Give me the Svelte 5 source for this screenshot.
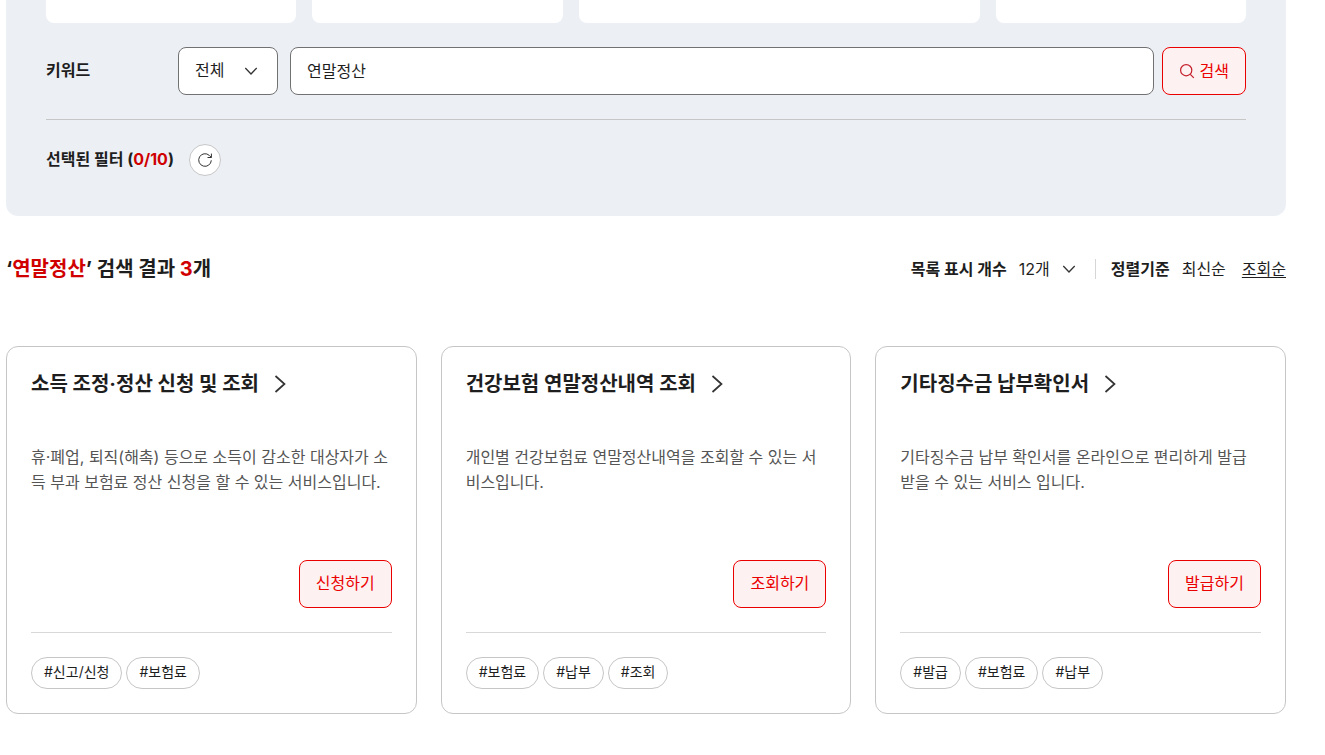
<script lang="ts">
  interface Service {
    title: string;
    desc: string;
    action: string;
    tags: string[];
  }

  let field = $state('전체');
  let keyword = $state('연말정산');
  let pageSize = $state('12개');
  let sort = $state('조회순');

  const filterBoxes = [1, 2, 3, 4];
  const sorts = ['최신순', '조회순'];

  const services: Service[] = [
    {
      title: '소득 조정·정산 신청 및 조회',
      desc: '휴·폐업, 퇴직(해촉) 등으로 소득이 감소한 대상자가 소득 부과 보험료 정산 신청을 할 수 있는 서비스입니다.',
      action: '신청하기',
      tags: ['신고/신청', '보험료'],
    },
    {
      title: '건강보험 연말정산내역 조회',
      desc: '개인별 건강보험료 연말정산내역을 조회할 수 있는 서비스입니다.',
      action: '조회하기',
      tags: ['보험료', '납부', '조회'],
    },
    {
      title: '기타징수금 납부확인서',
      desc: '기타징수금 납부 확인서를 온라인으로 편리하게 발급 받을 수 있는 서비스 입니다.',
      action: '발급하기',
      tags: ['발급', '보험료', '납부'],
    },
  ];
</script>

{#snippet chevron()}
  <svg class="chevron" viewBox="0 0 16 16" aria-hidden="true">
    <path d="M2.3 5l5.7 6 5.7-6" />
  </svg>
{/snippet}

<main class="page">
  <form class="filter" onsubmit={(e) => e.preventDefault()}>
    <div class="filter-boxes">
      {#each filterBoxes as box (box)}
        <div class="filter-box"></div>
      {/each}
    </div>

    <div class="keyword-row">
      <label class="label" for="keyword">키워드</label>
      <div class="select-wrap field-select">
        <select bind:value={field} aria-label="검색 구분">
          <option>전체</option>
          <option>제목</option>
        </select>
        {@render chevron()}
      </div>
      <input id="keyword" type="text" bind:value={keyword} />
      <button class="btn search" type="submit">
        <svg viewBox="0 0 16 16" aria-hidden="true">
          <circle cx="7.2" cy="7.2" r="5.6" />
          <path d="M11.3 11.3l3.5 3.5" />
        </svg>
        검색
      </button>
    </div>

    <div class="selected-row">
      <strong>선택된 필터 (<span class="point">0/10</span>)</strong>
      <button class="reset" type="reset" aria-label="초기화">
        <svg viewBox="0 0 16 16" aria-hidden="true">
          <path d="M14.3 8.3a6.3 6.3 0 1 1-2-4.9l2 2" />
          <path d="M14.4 1.6v3.9h-3.9" />
        </svg>
      </button>
    </div>
  </form>

  <div class="result-head">
    <h2>‘<span class="point">연말정산</span>’ 검색 결과 <span class="point">{services.length}</span>개</h2>
    <div class="options">
      <label class="label" for="page-size">목록 표시 개수</label>
      <div class="select-wrap size-select">
        <select id="page-size" bind:value={pageSize}>
          <option>12개</option>
          <option>24개</option>
        </select>
        {@render chevron()}
      </div>
      <div class="sort">
        <strong>정렬기준</strong>
        <div class="sort-list">
          {#each sorts as item (item)}
            <button type="button" class:active={sort === item} onclick={() => (sort = item)}>{item}</button>
          {/each}
        </div>
      </div>
    </div>
  </div>

  <ul class="cards">
    {#each services as service (service.title)}
      <li class="card">
        <h3>
          <a href="#detail">
            {service.title}
            <svg viewBox="0 0 20 20" aria-hidden="true">
              <path d="M5.5 2l9 8-9 8" />
            </svg>
          </a>
        </h3>
        <p>{service.desc}</p>
        <div class="card-action">
          <button class="btn" type="button">{service.action}</button>
        </div>
        <div class="tags">
          {#each service.tags as tag (tag)}
            <span class="tag">#{tag}</span>
          {/each}
        </div>
      </li>
    {/each}
  </ul>
</main>

<style>
  :global(body) {
    background: #fff;
    color: #1e1e1e;
    font-family: Inter, 'Noto Sans CJK KR', sans-serif;
    font-size: 16px;
    line-height: 24px;
  }

  .page,
  .page * {
    box-sizing: border-box;
  }

  .page {
    padding: 0 39px 40px 6px;
  }

  button,
  input,
  select {
    margin: 0;
    font: inherit;
    color: inherit;
  }

  button {
    cursor: pointer;
  }

  svg {
    flex-shrink: 0;
    fill: none;
    stroke: #333;
  }

  .point {
    color: #d00000;
  }

  .label {
    font-weight: 700;
  }

  /* 검색 필터 */
  .filter {
    padding: 0 40px 40px;
    background: #ecf0f5;
    border-radius: 0 0 12px 12px;
  }

  .filter-boxes {
    display: grid;
    grid-template-columns: 5fr 5fr 8fr 5fr;
    gap: 16px;
  }

  .filter-box {
    height: 23px;
    background: #fff;
    border-radius: 0 0 8px 8px;
  }

  .keyword-row {
    display: flex;
    align-items: center;
    padding: 24px 0;
    border-bottom: 1px solid #c6c6c6;
  }

  .keyword-row .label {
    width: 132px;
  }

  .keyword-row .label,
  .selected-row strong {
    padding-bottom: 2px;
  }

  .select-wrap {
    position: relative;
  }

  .select-wrap select {
    width: 100%;
    appearance: none;
    border: 0;
    background: transparent;
  }

  .chevron {
    position: absolute;
    top: 50%;
    right: 0;
    width: 16px;
    height: 16px;
    margin-top: -8px;
    stroke-width: 1.3;
    pointer-events: none;
  }

  .select-wrap.field-select {
    width: 100px;
    margin-right: 12px;
  }

  .field-select select {
    height: 48px;
    padding: 0 16px 2px;
    background: #fff;
    border: 1px solid #717171;
    border-radius: 8px;
  }

  .field-select .chevron {
    right: 19px;
  }

  input {
    flex: 1;
    min-width: 0;
    height: 48px;
    padding: 0 16px 2px;
    background: #fff;
    border: 1px solid #717171;
    border-radius: 8px;
  }

  .btn {
    height: 48px;
    padding: 0 16px 2px;
    color: #eb0000;
    background: #fdf1f1;
    border: 1px solid #eb0000;
    border-radius: 8px;
  }

  .search {
    display: flex;
    align-items: center;
    gap: 5px;
    margin-left: 8px;
    padding-bottom: 0;
  }

  .search svg {
    width: 16px;
    height: 16px;
    stroke: #c41e2a;
    stroke-width: 1.2;
  }

  .selected-row {
    display: flex;
    align-items: center;
    gap: 15px;
    padding-top: 24px;
  }

  .reset {
    display: flex;
    align-items: center;
    justify-content: center;
    width: 32px;
    height: 32px;
    padding: 0;
    background: #fff;
    border: 1px solid #c6c6c6;
    border-radius: 50%;
  }

  .reset svg {
    width: 16px;
    height: 16px;
    stroke-width: 1;
  }

  /* 결과 상단 */
  .result-head {
    display: flex;
    align-items: center;
    justify-content: space-between;
    margin: 37px 0 61px;
  }

  h2,
  h3 {
    margin: 0;
    font-size: 20px;
    font-weight: 700;
    line-height: 32px;
  }

  .options,
  .sort,
  .sort-list {
    display: flex;
    align-items: center;
  }

  .size-select {
    width: 58px;
    margin-left: 12px;
  }

  .size-select select {
    height: 24px;
    padding: 0;
  }

  .sort {
    gap: 12px;
    margin-left: 18px;
  }

  .sort::before {
    content: '';
    width: 1px;
    height: 20px;
    margin-right: 3px;
    background: #d6d6d6;
  }

  .sort-list {
    gap: 16px;
  }

  .sort-list button {
    padding: 0;
    background: none;
    border: 0;
  }

  .sort-list .active {
    text-decoration: underline;
    text-underline-offset: 2px;
  }

  /* 서비스 카드 */
  .cards {
    display: grid;
    grid-template-columns: repeat(3, 1fr);
    gap: 24px;
    margin: 0;
    padding: 0;
    list-style: none;
  }

  .card {
    display: flex;
    flex-direction: column;
    padding: 21px 24px 24px;
    border: 1px solid #c6c6c6;
    border-radius: 12px;
  }

  h3 a {
    display: inline-flex;
    align-items: center;
    gap: 11px;
    color: inherit;
    text-decoration: none;
  }

  h3 svg {
    width: 20px;
    height: 20px;
    stroke-width: 1.7;
  }

  .card p {
    min-height: 115px;
    margin: 45px 0 0;
    color: #555;
    line-height: 25px;
  }

  .card-action {
    display: flex;
    justify-content: flex-end;
    padding-bottom: 24px;
    border-bottom: 1px solid #d8d8d8;
  }

  .tags {
    display: flex;
    flex-wrap: wrap;
    gap: 4px;
    padding-top: 24px;
  }

  .tag {
    height: 32px;
    padding: 0 12px;
    border: 1px solid #c6c6c6;
    border-radius: 16px;
    font-size: 14px;
    line-height: 28px;
  }
</style>
